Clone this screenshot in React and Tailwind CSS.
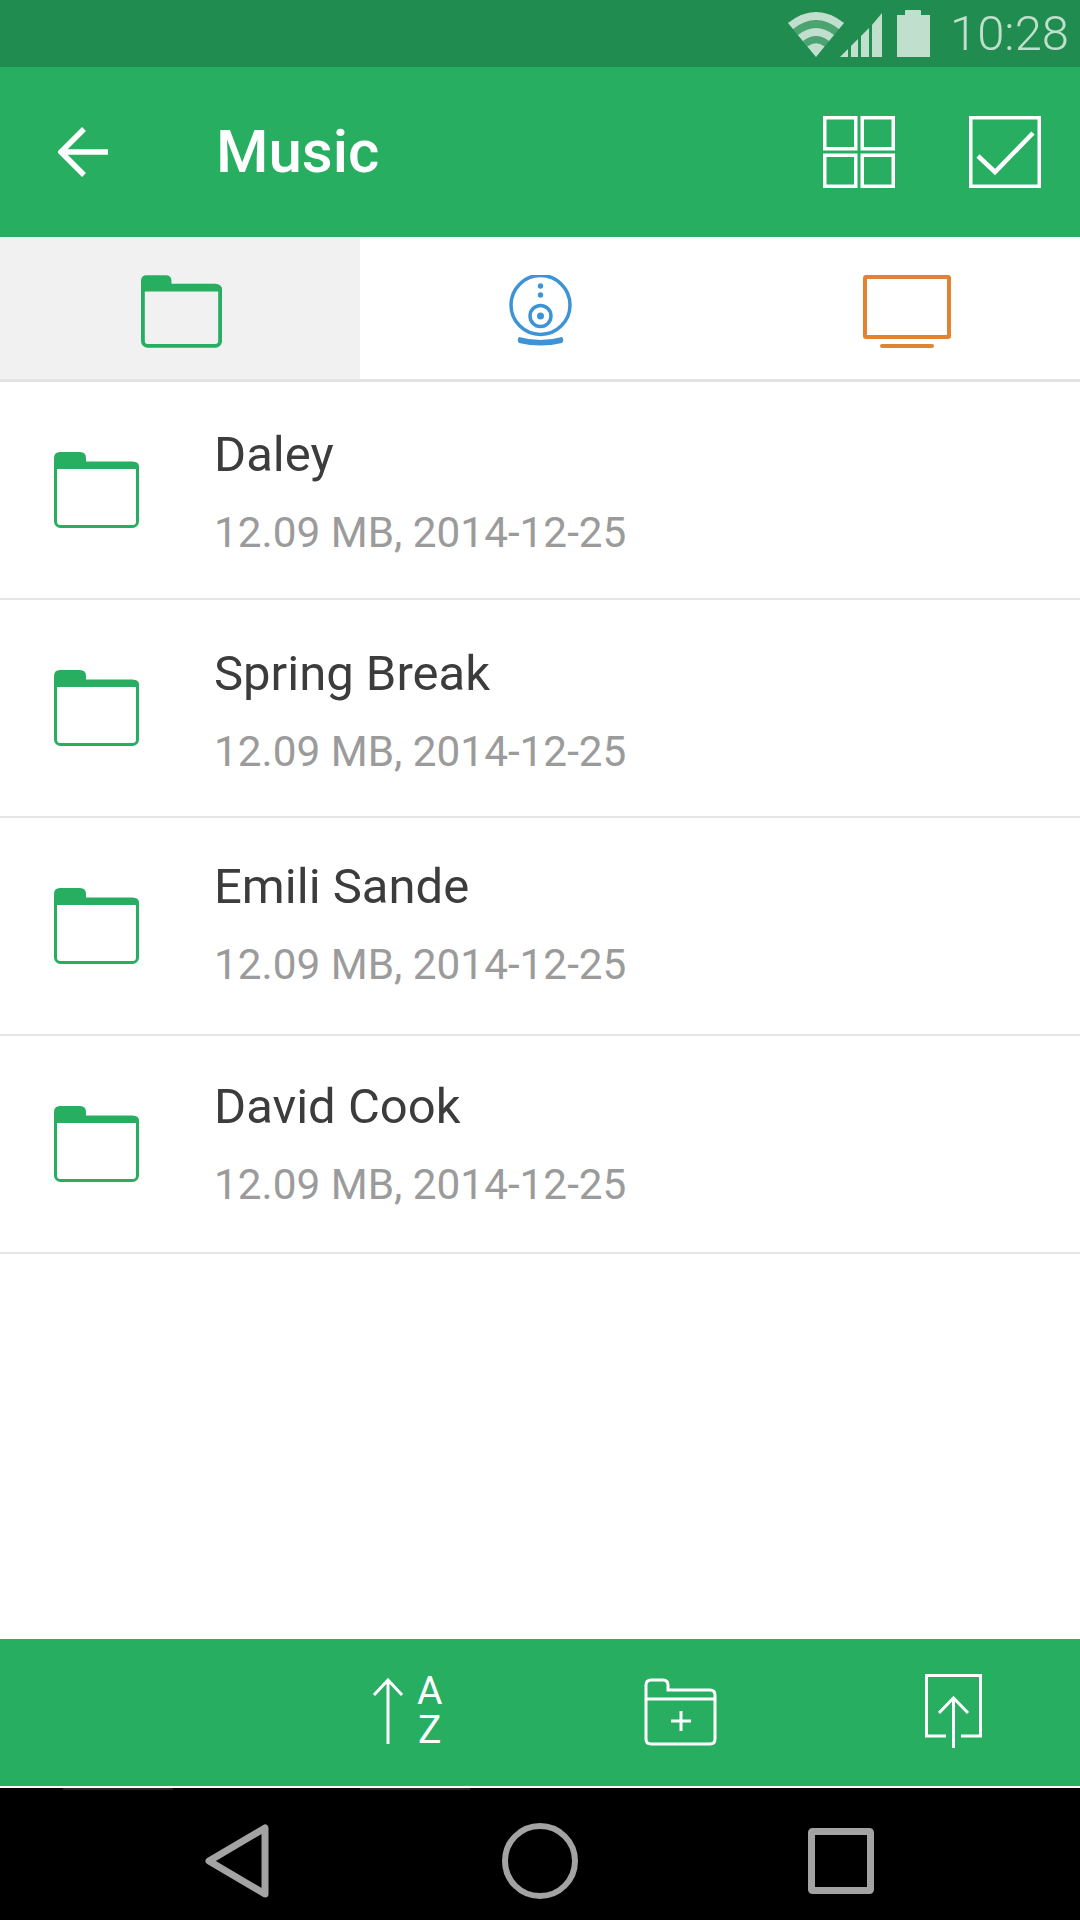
const FONT = "font-['Roboto','Noto_Sans',sans-serif]";

// rows in the reference aren't evenly spaced, so each one gets its own small nudge
const items = [
  { name: "Daley", nudge: "pt-[6px]" },
  { name: "Spring Break", nudge: "pt-[7px]" },
  { name: "Emili Sande", nudge: "pb-[2px]" },
  { name: "David Cook", nudge: "pt-[1px]" },
];

function FolderIcon({ className, stroke = 3 }) {
  return (
    <svg viewBox="0 0 85 76" className={className}>
      <rect
        x={stroke / 2}
        y="11"
        width={85 - stroke}
        height={65 - stroke / 2}
        rx="5"
        fill="none"
        stroke="#27ae60"
        strokeWidth={stroke}
      />
      <path d="M0 6 Q0 0 6 0 H26 Q32 0 32 6 V10 H80 Q85 10 85 15 V17 H0 Z" fill="#27ae60" />
    </svg>
  );
}

function WifiIcon() {
  return (
    <svg viewBox="0 0 56 46" className="h-[46px] w-[56px]" fill="#c0dfcd">
      <path d="M28 46 L0 12 Q28 -10 56 12 Z" opacity="0.28" />
      <path d="M28 46 L0 12 Q28 -10 56 12 L51 18 Q28 0 5 18 L10 24 Q28 10 46 24 L41 30 Q28 20 15 30 L19.5 35.5 Q28 29 36.5 35.5 Z" />
    </svg>
  );
}

function SignalIcon() {
  return (
    <svg viewBox="0 0 42 46" className="h-[46px] w-[42px]" fill="#c0dfcd">
      <path d="M0 46 L8 38 V46 Z" />
      <path d="M11 35 L18 28 V46 H11 Z" />
      <path d="M21 25 L29 17 V46 H21 Z" />
      <path d="M32 14 L42 2 V46 H32 Z" />
    </svg>
  );
}

function StatusBar() {
  return (
    <div className="flex h-[67px] items-center justify-end bg-[#218c50] pr-[11px]">
      <WifiIcon />
      <div className="ml-[-4px]">
        <SignalIcon />
      </div>
      <div className="ml-[15px] flex flex-col items-center">
        <div className="h-[5px] w-[16px] rounded-t-[1px] bg-[#c0dfcd]" />
        <div className="h-[42px] w-[33px] bg-[#c0dfcd]" />
      </div>
      <span className={`ml-[20px] text-[49px] leading-none font-light text-[#c0dfcd] ${FONT}`}>10:28</span>
    </div>
  );
}

function AppBar() {
  return (
    <div className="flex h-[170px] items-center bg-[#27ae60] text-white">
      <svg viewBox="0 0 50 50" className="ml-[58px] h-[50px] w-[50px]" fill="none" stroke="#fff" strokeWidth="5.5">
        <path d="M50 25 H3 M26 2 L3 25 L26 48" />
      </svg>
      <h1 className={`ml-[108px] text-[60px] leading-none font-medium ${FONT}`}>Music</h1>
      <svg viewBox="0 0 72 72" className="ml-auto h-[72px] w-[72px]" fill="none" stroke="#fff" strokeWidth="3.5">
        <rect x="1.75" y="1.75" width="31" height="31" />
        <rect x="39.25" y="1.75" width="31" height="31" />
        <rect x="1.75" y="39.25" width="31" height="31" />
        <rect x="39.25" y="39.25" width="31" height="31" />
      </svg>
      <svg viewBox="0 0 72 72" className="mr-[39px] ml-[74px] h-[72px] w-[72px]" fill="none" stroke="#fff" strokeWidth="3.5">
        <rect x="1.75" y="1.75" width="68.5" height="68.5" />
        <path d="M9 40 L26 56 L64 17" strokeWidth="4.5" />
      </svg>
    </div>
  );
}

function Tabs() {
  return (
    <div className="grid h-[145px] grid-cols-3 border-b-[3px] border-[#e2e2e2]">
      <div className="flex items-center justify-center bg-[#f1f1f1] pt-[6px] pl-[2px]">
        <FolderIcon className="h-[73px] w-[81px]" stroke={4} />
      </div>
      <div className="flex items-center justify-center pt-[6px]">
        <svg viewBox="0 0 63 73" className="h-[73px] w-[63px]" fill="none" stroke="#3c94d6">
          <circle cx="31.5" cy="30" r="29.5" strokeWidth="3.5" />
          <circle cx="31.5" cy="41" r="10.5" strokeWidth="3.5" />
          <circle cx="31.5" cy="41" r="3.5" fill="#3c94d6" stroke="none" />
          <circle cx="31.5" cy="11" r="2.7" fill="#3c94d6" stroke="none" />
          <circle cx="31.5" cy="20" r="2.7" fill="#3c94d6" stroke="none" />
          <path d="M10 62 Q31.5 68 53 62 Q55.5 65 53 68 Q31.5 73 10 68 Q7.5 65 10 62 Z" fill="#3c94d6" stroke="none" />
        </svg>
      </div>
      <div className="flex items-center justify-center pt-[6px] pl-[14px]">
        <svg viewBox="0 0 88 73" className="h-[73px] w-[88px]" fill="none" stroke="#e08431">
          <rect x="2" y="2" width="84" height="60" rx="1" strokeWidth="4" />
          <path d="M19 71 H69" strokeWidth="4" strokeLinecap="round" />
        </svg>
      </div>
    </div>
  );
}

function FileRow({ name, nudge }) {
  return (
    <div className="flex h-[218px] items-center border-b-2 border-[#e6e6e6] pl-[54px]">
      <FolderIcon className="h-[76px] w-[85px] shrink-0" />
      <div className={`ml-[75px] ${nudge} ${FONT}`}>
        <div className="text-[49px] leading-[54px] text-[#3c3c3c]">{name}</div>
        <div className="mt-[26px] text-[42.3px] leading-[50px] text-[#9b9b9b]">12.09 MB, 2014-12-25</div>
      </div>
    </div>
  );
}

function BottomBar() {
  return (
    <div className="flex h-[149px] items-center border-b-2 border-white bg-[#27ae60] pl-[372px] text-white">
      <div className="flex h-[78px] w-[71px] items-center pb-[3px]">
        <svg viewBox="0 0 32 66" className="h-[66px] w-[32px]" fill="none" stroke="#fff" strokeWidth="3">
          <path d="M16 66 V3 M2 17 L16 2 L30 17" />
        </svg>
        <div className={`ml-[13px] text-center text-[39px] leading-[39px] font-normal ${FONT}`}>
          A
          <br />
          Z
        </div>
      </div>
      <svg viewBox="0 0 73 68" className="mb-[2px] ml-[201px] h-[68px] w-[73px]" fill="none" stroke="#fff" strokeWidth="3">
        <path d="M2 7 Q2 2 7 2 H19 Q24 2 24 7 V12 H66 Q71 12 71 17 V61 Q71 66 66 66 H7 Q2 66 2 61 Z" />
        <path d="M2 21 H71" />
        <path d="M37 33 V53 M27 43 H47" />
      </svg>
      <svg viewBox="0 0 57 74" className="mb-[3px] ml-[208px] h-[74px] w-[57px]" fill="none" stroke="#fff" strokeWidth="3">
        <path d="M21 62 H1.5 V1.5 H55.5 V62 H36" />
        <path d="M28.5 74 V25 M14 39 L28.5 24 L43 39" />
      </svg>
    </div>
  );
}

function NavBar() {
  return (
    <div className="flex h-[132px] flex-col bg-black">
      <div className="flex h-[2px] pl-[63px]">
        <div className="w-[110px] bg-[#222]" />
        <div className="ml-[187px] w-[110px] bg-[#222]" />
      </div>
      <div className="flex flex-1 items-center pt-[12px] pl-[205px]">
        <svg viewBox="0 0 64 74" className="h-[74px] w-[64px]" fill="none" stroke="#a3a3a3" strokeWidth="7" strokeLinejoin="round">
          <path d="M4 37 L60 4 V70 Z" />
        </svg>
        <svg viewBox="0 0 76 76" className="ml-[233px] h-[76px] w-[76px]" fill="none" stroke="#a3a3a3" strokeWidth="6">
          <circle cx="38" cy="38" r="35" />
        </svg>
        <svg viewBox="0 0 66 66" className="ml-[230px] h-[66px] w-[66px]" fill="none" stroke="#a3a3a3" strokeWidth="7" strokeLinejoin="round">
          <rect x="3.5" y="3.5" width="59" height="59" rx="1" />
        </svg>
      </div>
    </div>
  );
}

export default function App() {
  return (
    <div className="flex h-[1920px] w-[1080px] flex-col bg-white">
      <StatusBar />
      <AppBar />
      <Tabs />
      <div className="flex-1">
        {items.map((item) => (
          <FileRow key={item.name} name={item.name} nudge={item.nudge} />
        ))}
      </div>
      <BottomBar />
      <NavBar />
    </div>
  );
}
